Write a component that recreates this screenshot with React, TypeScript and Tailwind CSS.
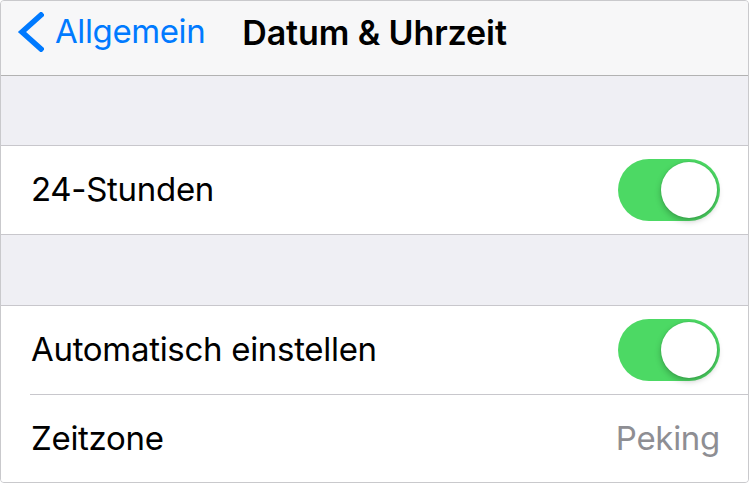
const font = { fontFamily: 'Inter, "Liberation Sans", sans-serif' }

function Toggle() {
  return (
    <div className="w-[102px] h-[62px] rounded-full bg-[#4cd964] flex items-center justify-end pr-[3px]">
      <div className="w-[56px] h-[56px] rounded-full bg-white shadow-[0_3px_6px_rgba(0,0,0,0.25),0_0_0_1px_rgba(0,0,0,0.04)]" />
    </div>
  )
}

export default function App() {
  return (
    <div className="w-[750px] h-[484px] bg-white" style={font}>
      <div className="w-[749px] h-[483px] border border-[#c9c9cc] rounded-[4px] overflow-hidden flex flex-col bg-[#efeff4]">
        {/* Nav bar */}
        <div className="h-[75px] border-b border-[#b2b2b2] bg-[#f7f7f8] grid grid-cols-[1fr_auto_1fr] items-center pb-[12px] shrink-0">
          <div className="flex items-center pl-[16px] gap-[11px] text-[#007aff]">
            <svg width="27" height="40" viewBox="0 0 27 40" className="shrink-0">
              <path d="M24 3 L5 20 L24 37" fill="none" stroke="#007aff" strokeWidth="5.5" strokeLinecap="square" strokeLinejoin="miter" />
            </svg>
            <span className="text-[33px] tracking-[-0.4px]">Allgemein</span>
          </div>
          <span className="text-[34px] font-semibold text-black tracking-[-0.1px]">Datum &amp; Uhrzeit</span>
          <div />
        </div>

        <div className="h-[69px] shrink-0" />

        {/* Group 1 */}
        <div className="bg-white border-y border-[#c8c7cc] shrink-0">
          <div className="h-[88px] flex items-center justify-between pl-[30px] pr-[28px]">
            <span className="text-[33px] text-black tracking-[-0.3px]">24-Stunden</span>
            <Toggle />
          </div>
        </div>

        <div className="h-[70px] shrink-0" />

        {/* Group 2 */}
        <div className="bg-white border-t border-[#c8c7cc] flex-1">
          <div className="h-[88px] flex items-center justify-between pl-[30px] pr-[28px]">
            <span className="text-[33px] text-black tracking-[-0.3px]">Automatisch einstellen</span>
            <Toggle />
          </div>
          <div className="ml-[29px] border-t border-[#c8c7cc]" />
          <div className="h-[87px] flex items-center justify-between pl-[30px] pr-[28px]">
            <span className="text-[33px] text-black tracking-[-0.3px]">Zeitzone</span>
            <span className="text-[33px] text-[#8e8e93] tracking-[-0.3px]">Peking</span>
          </div>
        </div>
      </div>
    </div>
  )
}
